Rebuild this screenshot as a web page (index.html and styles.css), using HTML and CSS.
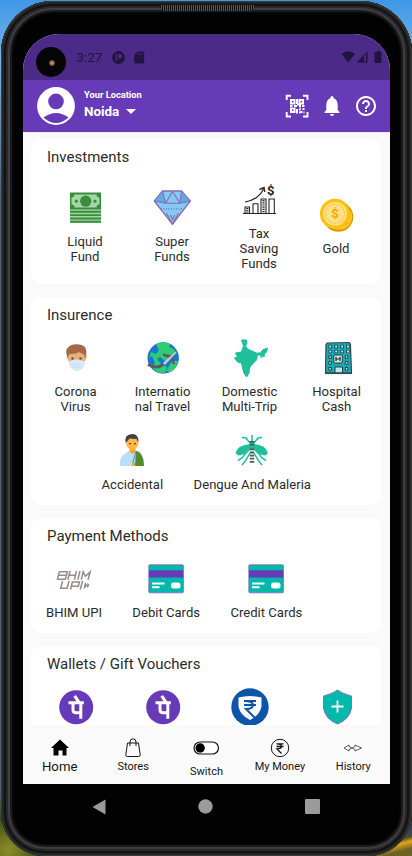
FILE: index.html
```html
<!DOCTYPE html>
<html lang="en">
<head>
<meta charset="utf-8">
<title>Wallet</title>
<link rel="stylesheet" href="styles.css">
</head>
<body>
<svg class="defs" width="0" height="0">
  <defs>
    <symbol id="card" viewBox="0 0 40 40">
      <rect x="2.800" y="5.800" width="34.600" height="28" rx="1" fill="#00b9aa" stroke="#8068c0" stroke-width=".8"/>
      <rect x="3" y="11.300" width="34.200" height="7.200" fill="#673ab7"/>
      <path d="M6 24.600h12.500M6 28.300h7.500" stroke="#fff" stroke-width="2"/>
      <rect x="25" y="23.500" width="9.500" height="6" rx="2.500" fill="#fff"/>
    </symbol>
    <symbol id="pe" viewBox="0 0 40 40">
      <circle cx="20.200" cy="20.300" r="17" fill="#673ab7"/>
      <path d="M12.500 15.800H27.800M18.700 8.800L23 15.300M17 16v6.500q0 3.200 3 3.200h4.500M24.800 16V31.800" fill="none" stroke="#fff" stroke-width="3"/>
    </symbol>
  </defs>
</svg>
<div class="phone">
  <div class="speaker"></div>
  <div class="screen">
    <div class="status">
      <span class="camera"><i></i></span>
      <span class="time">3:27</span>
      <svg class="st-app" width="13" height="13" viewBox="0 0 13 13"><circle cx="6.500" cy="6.500" r="6.400"/><path d="M3.800 3h1.400v7H3.800zM6.500 3h1.500a2.200 2.200 0 0 1 0 4.500H6.500z" fill="#4b2b87"/></svg>
      <svg class="st-sd" width="11" height="13" viewBox="0 0 11 13"><path d="M3.500.5H9q1.200 0 1.200 1.200v9.800q0 1-1.200 1H1.500q-1.200 0-1.200-1V4z"/><path d="M4 2v2M6 2v2M8 2v2" stroke="#4b2b87"/></svg>
      <svg class="st-right" width="44" height="14" viewBox="0 0 44 14"><path d="M.5 4q7-5.500 13.500 0L7.200 12.500z"/><path d="M15.500 12.500L26.500 1.500v11zM23 6v5.500h2V4z" fill-rule="evenodd"/><path d="M33.500 2H36V.8h3V2h1.500v11h-7z"/></svg>
    </div>
    <header class="header">
      <svg class="avatar" width="38" height="38" viewBox="0 0 38 38"><circle cx="19" cy="19" r="18.900" fill="#fff"/><circle cx="19" cy="14.400" r="7.800" fill="#673ab7"/><path d="M6.500 30.500Q19 21.500 31.500 30.500Q19 41.500 6.500 30.500z" fill="#673ab7"/></svg>
      <div class="place">
        <span class="place-label">Your Location</span>
        <span class="place-name">Noida <svg width="10" height="5" viewBox="0 0 10 5"><path d="M0 0h10L5 5z" fill="#fff"/></svg></span>
      </div>
      <svg class="qr" width="24" height="24" viewBox="0 0 24 24" fill="none" stroke="#fff"><path d="M1.700 6V1.700H6M18 1.700h4.500V6M22.500 18v4.500H18M6 22.500H1.700V18" stroke-width="1.900"/><path d="M6 6h3.500v3.500H6zM14.500 6H18v3.500h-3.500zM6 14.500h3.500V18H6z" stroke-width="2"/><path d="M5 12h2.500M9 12h3M12 5v5M12 10.500h3v3M17 12h2.500M12 15v4.500M14 15.500h2M16.500 17v2M18.500 14v2M14 18.500h1.500M18.500 18.500h1" stroke-width="2"/></svg>
      <svg class="bell" width="24" height="24" viewBox="0 0 24 24"><path fill="#fff" d="M12 22c1.100 0 2-.9 2-2h-4c0 1.100.9 2 2 2zm5.700-6v-5c0-3.500-1.600-6-4.200-6.700V3.500a1.500 1.500 0 0 0-3 0v.8C7.900 5 6.300 7.500 6.300 11v5l-1.800 2v1h15v-1z"/></svg>
      <svg width="24" height="24" viewBox="0 0 24 24"><path fill="#fff" d="M11 18h2v-2h-2v2zm1-16C6.480 2 2 6.480 2 12s4.480 10 10 10 10-4.480 10-10S17.520 2 12 2zm0 18c-4.410 0-8-3.590-8-8s3.590-8 8-8 8 3.590 8 8-3.590 8-8 8zm0-14c-2.210 0-4 1.790-4 4h2c0-1.100.9-2 2-2s2 .9 2 2c0 2-3 1.750-3 5h2c0-2.250 3-2.500 3-5 0-2.210-1.790-4-4-4z"/></svg>
    </header>
    <main class="content">
      <section class="panel invest">
        <h2>Investments</h2>
        <div class="row">
          <div class="item">
            <svg viewBox="0 0 40 40"><path fill="#388e3c" d="M5 4.500h31v17.200H5z"/><path fill="#a5d6a7" d="M9.500 6.500h22q0 3 3 3v7q-3 0-3 3h-22q0-3-3-3v-7q3 0 3-3z"/><circle cx="20.700" cy="13.200" r="5.600" fill="#388e3c"/><circle cx="11.300" cy="13.200" r="1.600" fill="#388e3c"/><circle cx="30" cy="13.200" r="1.600" fill="#388e3c"/><path stroke="#a5d6a7" stroke-width="13" d="M5 28.200h31"/><path stroke="#388e3c" stroke-width="1.900" d="M5 23.800h31M5 27.100h31M5 30.500h31M5 33.800h31"/></svg>
            <span>Liquid<br>Fund</span>
          </div>
          <div class="item">
            <svg viewBox="0 0 40 40" fill="none" stroke="#8c6ba8" stroke-linejoin="round"><path fill="#85c8f5" stroke-width="1.300" d="M10.500 3h19L38.300 13 20.500 36.300 2.300 13z"/><path fill="#5da9e8" stroke="none" d="M29.500 3.500L37.500 13l-10 2.200zM10.500 3.500L3.200 13l10 2z"/><path stroke-width="1.100" d="M2.300 13l11 2.300H28L38.300 13M10.500 3l3 12.300L20.500 3.500 28 15.300 29.500 3M20.500 36.300L14.500 25M20.500 36.300L26.500 25M18.500 27l2 5 2-5"/><path stroke="#7487c0" stroke-width="1.800" stroke-dasharray="1 1.500" d="M9 20.800h24"/></svg>
            <span>Super<br>Funds</span>
          </div>
          <div class="item">
            <svg viewBox="0 0 40 40" fill="none" stroke="#252525"><path d="M4 33.500h33" stroke-width="1.200"/><path d="M6 33v-6h4.500v6M14 33V23.800h5V33M22 33V19h5v14M30 33V19h5.300v14" stroke-width="1.100"/><path d="M8.300 28v5M24.500 20v13" stroke-width="2.200" stroke-dasharray="1.200 1"/><path d="M6 22Q19 20 24.500 9" stroke-width="1.200"/><path d="M20.500 9.500l4.500-2 .7 4.500" stroke-width="1.500"/><text x="28" y="15" font-size="13" font-weight="700" fill="#252525" stroke="none">$</text></svg>
            <span>Tax<br>Saving<br>Funds</span>
          </div>
          <div class="item narrow">
            <svg viewBox="0 0 40 40"><circle cx="22.300" cy="21.800" r="15" fill="#d69b0d"/><path d="M8 26Q16 36 31 29L35 15Q39 29 28 34Q15 37 8 26z" fill="#ffc31b"/><circle cx="19" cy="18.700" r="15" fill="#ffc107"/><circle cx="19" cy="18.700" r="12" fill="#ffe082"/><circle cx="19" cy="18.700" r="9.500" fill="none" stroke="#f5bb2c" stroke-width="1.200" stroke-dasharray="1.200 1.500"/><text x="19" y="23.300" text-anchor="middle" font-size="13" font-weight="700" fill="#f4a900">$</text></svg>
            <span>Gold</span>
          </div>
        </div>
      </section>
      <section class="panel insure">
        <h2>Insurence</h2>
        <div class="row">
          <div class="item">
            <svg viewBox="0 0 40 40"><path fill="#e6b176" d="M12.500 14h17l1.500 5-2.500 5q-1 8-8 9-6-1-7.500-9L10.500 19z"/><path fill="#a4694a" d="M11.500 20Q8.500 12 12 9.500 15 6 21 6.300q9 .2 9.300 6.700.5 3-1.300 7l-1.500-4q-3-.5-4-2-4 2.500-10 2z"/><path fill="#523b38" d="M15.500 19.500h2v2h-2zM23.500 19.500h2v2h-2z"/><path fill="#d7ebfa" d="M12.500 23.500l4-1.200q4-1.500 8 0l4.500 1.200q0 8-8.300 10-7.700-2-8.200-10z"/><path stroke="#b8d4e6" stroke-width=".6" d="M16 26h9M16.500 29h8"/></svg>
            <span>Corona<br>Virus</span>
          </div>
          <div class="item">
            <svg viewBox="0 0 40 40"><circle cx="20.200" cy="20" r="15.700" fill="#1976d2"/><path fill="#2fcc71" d="M13 6q7-3.500 14 0l-1 3 4 1.500 4 5q-5 1-7 5l-5 2.500-5-4-3 2 4 5 6 3-2 6q-9 .5-13-6l3-4-3-7-3 2 2-6 5 2 3-4zM29 23l6 0q-2 8-8 11l-4-1z"/><path d="M5 26.500q9 5 15 0" stroke="#5a5c62" stroke-width="3" fill="none"/><path d="M20 15.500l10 2 2 9-2.500-.5-2-5.500-7.500-2.500z" fill="#5a5c62"/><path d="M20 25L32 14q2-1.500 1 1L22 27z" fill="#c5cdd2"/></svg>
            <span>Internatio<br>nal Travel</span>
          </div>
          <div class="item">
            <svg viewBox="0 0 40 40"><path fill="#20bf9c" stroke="#20bf9c" stroke-linejoin="round" d="M11.500 2l5 0 .5 3-1.500 3 2 3 9 4 4 0 2-3 5-2-1 4-2 2-.5 3-1.500-2-1 3-1-3-3 0-1 5-5 5-2 3-.5 5-2.500 4-3-5-2-9-4-1-3-4 3-1-2-4 6-1 2-6z"/></svg>
            <span>Domestic<br>Multi-Trip</span>
          </div>
          <div class="item">
            <svg viewBox="0 0 40 40"><path fill="#16abb5" stroke="#37474b" stroke-width="1.200" d="M10 5l22-.5q2 1 1.500 4l1 26.500H8.500L9 7z"/><path stroke="#263e43" stroke-width="3.600" stroke-dasharray="3.600 2.300" d="M11.500 8.500h21M11.500 13.500h21"/><path stroke="#bde2e4" stroke-width="1.800" stroke-dasharray="2 3.900" d="M12.300 8.500h20M12.300 13.500h20"/><g fill="#c7e5e6" stroke="#263e43"><path d="M11.800 17.800h2.600v2.600h-2.600zM28.300 17.800h2.600v2.600h-2.600zM11.800 23.500h2.600v2.600h-2.600zM28.300 23.500h2.600v2.600h-2.600zM11.800 29.500h2.600v2.600h-2.600zM28.300 29.500h2.600v2.600h-2.600z"/><rect x="16.800" y="17" width="8.500" height="8" rx="1"/><path d="M18 29h7.500v6H18z"/></g><path d="M19 19v4M23 19v4M19 21h4" stroke="#20292c" stroke-width="1.200"/><path d="M8 35.300h27" stroke="#37474b" stroke-width="1.500"/></svg>
            <span>Hospital<br>Cash</span>
          </div>
        </div>
        <div class="row second">
          <div class="item">
            <svg viewBox="0 0 40 40"><path fill="#bbdefb" d="M8 35q-.5-8 3-11l6-4h8l-2 15z"/><path fill="#558b2f" d="M24 19.500q8 2 8 15.500h-9z"/><path fill="#ffa726" d="M17.500 17h6v4l-3 2-3-2z"/><circle cx="20.200" cy="12.500" r="6" fill="#ffb74d"/><path fill="#424242" d="M13.800 12Q12 4 19 3.200q8-1 7.500 8.800l-2-4-7-.5z"/><path fill="#784719" d="M17 12h2v1.200h-2zM22 12h2v1.200h-2z"/><path d="M24 20L21 31l2 3" fill="none" stroke="#5d9bcf" stroke-width="1.200"/><path fill="#ffa726" d="M20.500 31l2.500 2-.5 2h-3z"/></svg>
            <span>Accidental</span>
          </div>
          <div class="item">
            <svg viewBox="0 0 40 40" fill="none" stroke="#20bf9c" stroke-width="1.500"><path fill="#20bf9c" stroke="none" d="M18.500 13Q5 14 3.500 22l2.500 2.500q7 0 12.500-8zM21.500 13Q34 14 36 22l-2.500 2.500q-7 0-12-8z"/><path d="M20 4v6M18 12l-4-5-4-.5M22 12l4-5 4-.5M18 18l-5 5-3 4-4 2.500M22 18l5 5 3 4 4 2.500M18 22l-4 7-4 5M22 22l4 7 4 5"/><path stroke-width="5" d="M20 10v9"/><path stroke="#4a5656" stroke-width="4.400" stroke-dasharray="1.800 1.300" d="M20 10v4.500M20 17.500v15.500"/></svg>
            <span>Dengue And Maleria</span>
          </div>
        </div>
      </section>
      <section class="panel pay">
        <h2>Payment Methods</h2>
        <div class="row">
          <div class="item">
            <svg viewBox="0 0 40 40" fill="none" stroke="#978c8b" stroke-width="1.500"><path d="M4.500 16.300h8l-1.300 4.200M5.500 12.800h7.800l-.9 3.500M5.300 12.500L3.500 20.300h7.700M16 12l-2.200 8.800M22.500 12l-2.200 8.800M15 16.300h6.500M26 12l-2.200 8.800M27.200 20.800l2-8 2.200 4.500 4.800-4.500-2.200 8M8.500 22l-1.800 7.300h6.500L15 22M16.500 30.500l1.900-7.500h7l-1.100 4.300h-6.500M28.500 22l-2.200 8.500"/><path d="M31 23l2.500 3.500-4 4zM33.500 23.500l2 2.800-2.500 3z" fill="#978c8b" stroke="none"/></svg>
            <span>BHIM UPI</span>
          </div>
          <div class="item"><svg><use href="#card"/></svg><span>Debit Cards</span></div>
          <div class="item"><svg><use href="#card"/></svg><span>Credit Cards</span></div>
        </div>
      </section>
      <section class="panel wallets">
        <h2>Wallets / Gift Vouchers</h2>
        <div class="row">
          <div class="item"><svg><use href="#pe"/></svg></div>
          <div class="item"><svg><use href="#pe"/></svg></div>
          <div class="item">
            <svg viewBox="0 0 40 40"><circle cx="20" cy="20" r="18.700" fill="#0d55a8"/><path fill="#fff" d="M8.500 10.500Q20 7.500 31.500 10.500v9q-2 9-11.500 13.500-10-5-11.500-13.500z"/><path d="M14 14h12M14 18h12M14.500 14q8.500 0 8.500 4t-7 4l9 9" fill="none" stroke="#0d55a8" stroke-width="2"/></svg>
          </div>
          <div class="item">
            <svg viewBox="0 0 40 40"><path fill="#00b9aa" stroke="#7c65c0" stroke-width=".9" d="M20.500 3Q26 7 34.500 9v12q-1.500 11-14 16-12.500-5-14-16V9Q15 7 20.500 3z"/><path stroke="#fff" stroke-width="1.800" d="M14.500 19.500h12M20.500 13.500v12"/></svg>
          </div>
        </div>
      </section>
    </main>
    <nav class="tabs">
      <div class="tab home"><svg width="20" height="20" viewBox="0 0 20 20"><path d="M10 1.500L19 10h-2.500v7.500h-4v-5h-4v5h-5V10H1z"/></svg><span>Home</span></div>
      <div class="tab"><svg width="20" height="20" viewBox="0 0 20 20" fill="none" stroke="#151515"><path d="M4.500 5h11l1.700 12q0 1.500-1.500 1.500H4.300q-1.500 0-1.500-1.500z"/><path d="M7 8V4q0-3.200 3-3.200T13 4v4"/></svg><span>Stores</span></div>
      <div class="tab switch"><svg width="27" height="20" viewBox="0 0 27 20"><rect x="1" y="4" width="24.500" height="12" rx="6" fill="#fff" stroke="#151515" stroke-width="1.200"/><circle cx="7.200" cy="10" r="4.700"/></svg><span>Switch</span></div>
      <div class="tab"><svg width="20" height="20" viewBox="0 0 20 20" fill="none" stroke="#151515"><circle cx="10" cy="10" r="8.700"/><path d="M6.500 5.800h7M6.500 8.500h7M7 5.800q4.500 0 4.500 2.500T7 11l4.500 4.500" stroke-width="1.300"/></svg><span>My Money</span></div>
      <div class="tab"><svg width="20" height="20" viewBox="0 0 20 20" fill="none" stroke="#333" stroke-width=".8"><path d="M1 10l5-3v1.500l6 3V13l6.500-3L12 7v1.500l-6 3V13z"/></svg><span>History</span></div>
    </nav>
  </div>
  <div class="keys">
    <svg width="14" height="16" viewBox="0 0 14 16"><path d="M.5 8L13.500 .5v15z"/></svg>
    <svg width="15" height="15" viewBox="0 0 15 15"><circle cx="7.500" cy="7.500" r="7.200"/></svg>
    <svg width="15" height="15" viewBox="0 0 15 15"><rect width="15" height="15" rx="1"/></svg>
  </div>
</div>
</body>
</html>
```
FILE: styles.css
```css
* { box-sizing: border-box; }

body {
  margin: 0;
  width: 412px;
  height: 856px;
  overflow: hidden;
  font-family: Roboto, "Liberation Sans", sans-serif;
  color: #2b2b2b;
  background:
    radial-gradient(circle at 8px 850px, #8d8c26, #6c7420 14px, #33491f 34px, transparent 60px),
    linear-gradient(165deg, #2d3a5c 60%, #4b4d35 74%, #e5a31a 80%, #6b6324 90%) 352px 796px / 60px 60px no-repeat,
    linear-gradient(#3f97e6, #7ab7ea 60px, #47607a 200px);
}

.defs { position: absolute; }

.phone {
  position: relative;
  width: 411px;
  height: 855px;
  margin: 1px 0 0 1px;
  padding: 33px 21px 0 22px;
  border-radius: 52px 52px 44px 44px;
  background: #020203;
  box-shadow:
    inset 0 0 0 1px #3c3d3a,
    inset 0 0 0 3px #242522,
    inset 0 0 0 5px #121213,
    inset 0 0 0 7px #29292c,
    inset 0 0 0 9px #3e3e42,
    inset 0 0 0 11px #1b1b1e,
    inset 0 0 3px 12px #0b0b0d;
}

.speaker {
  position: absolute;
  top: 4px;
  left: 159px;
  width: 94px;
  height: 6px;
  border-radius: 0 0 5px 5px;
  background: repeating-linear-gradient(90deg, #151515 0 1px, #565656 1px 2px);
}

.screen {
  position: relative;
  display: flex;
  flex-direction: column;
  width: 367px;
  height: 750px;
  overflow: hidden;
  border-radius: 36px 36px 0 0;
  background: #fafafa;
}

.status {
  display: flex;
  align-items: center;
  flex: 0 0 46px;
  padding: 0 7px 0 53.500px;
  background: #4b2b87;
  color: #21143f;
  fill: #21143f;
}

.camera {
  position: absolute;
  top: 13px;
  left: 13px;
  width: 30px;
  height: 30px;
  padding: 12.500px;
  border-radius: 50%;
  background: #050505;
}

.camera i {
  display: block;
  width: 6px;
  height: 6px;
  border-radius: 50%;
  background: radial-gradient(#e0b090, #6a4b3c 60%, #1a1210);
}

.time { width: 35px; font-size: 13.300px; }
.st-sd { margin-left: 9px; }
.st-right { margin-left: auto; margin-right: -2px; }

.header {
  display: flex;
  align-items: center;
  flex: 0 0 52px;
  padding: 0 12px 0 14px;
  background: #673ab7;
  color: #fff;
}

.place { display: flex; flex-direction: column; width: 190px; margin: -3px 0 0 9px; font-weight: 700; }
.place-label { font-size: 9.300px; line-height: 14px; }
.place-name { font-size: 13.400px; line-height: 20px; }
.place-name svg { margin: 0 0 2px 3px; }
.qr { margin-left: auto; }
.bell { margin: 0 10.500px; }

.content {
  display: flex;
  flex-direction: column;
  gap: 13px;
  height: 593px;
  padding: 6px 9px 0 8px;
  overflow: hidden;
  border-top: 1px solid #eeecf3;
}

.panel {
  flex: none;
  padding-top: 8px;
  border-radius: 10px;
  background: #fff;
}

.invest { height: 144.500px; }
.insure { height: 208.500px; }
.pay { height: 115px; }
.wallets { height: 130px; }

h2 {
  margin: 0;
  padding-left: 16px;
  font-size: 15px;
  font-weight: 400;
  line-height: 20px;
}

.row { display: flex; align-items: center; margin-top: 13px; }
.item { display: flex; flex-direction: column; align-items: center; flex: 0 0 87px; gap: 6px; }
.item svg { width: 40px; height: 40px; }
.item span { font-size: 13.100px; line-height: 15px; text-align: center; white-space: nowrap; }

.invest .row { padding-left: 10.500px; }
.invest .narrow { flex-basis: 67px; }
.insure .row { padding-left: 1px; }
.insure .second { margin-top: 17.500px; padding-left: 70.500px; gap: 30.500px; }
.second .item { flex-basis: auto; }
.pay .row { padding-left: 15px; gap: 30.300px; }
.pay .item { flex-basis: auto; }
.wallets .row { padding-left: 1px; }

.tabs {
  display: flex;
  flex: 0 0 59px;
  padding: 13px 0 0;
  background: #fafafa;
  color: #151515;
}

.tab { display: flex; flex: 1; flex-direction: column; align-items: center; font-size: 11px; line-height: 16px; }
.tab svg { flex: none; }
.tab span { margin-top: 1px; }
.home { font-size: 13.200px; }
.home span { margin-top: 1px; }
.switch span { margin-top: 6px; }

.keys {
  display: flex;
  justify-content: space-between;
  align-items: center;
  height: 45px;
  padding: 0 71px 0 69px;
  fill: #9b9b9b;
}
```
